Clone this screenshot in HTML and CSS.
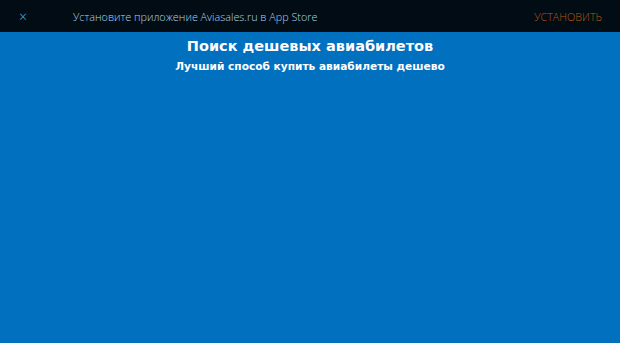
FILE: index.html
```html
<!DOCTYPE html>
<html lang="ru">
<head>
  <meta charset="UTF-8">
  <title>Aviasales</title>
  <link rel="stylesheet" href="styles.css">
</head>
<body>
  <div class="app-banner">
    <span class="close">&times;</span>
    <span class="banner-text">Установите приложение Aviasales.ru в App Store</span>
    <span class="install">УСТАНОВИТЬ</span>
  </div>
  <div class="hero">
    <h1>Поиск дешевых авиабилетов</h1>
    <p>Лучший способ купить авиабилеты дешево</p>
  </div>
</body>
</html>
```
FILE: styles.css
```css
html, body { height: 100%; }
body { margin: 0; background: #0070bf; font-family: "DejaVu Sans", sans-serif; }
.app-banner {
  height: 32px;
  background: #020c15;
  display: flex;
  align-items: center;
  font-family: "Open Sans", sans-serif;
  font-weight: 300;
  font-size: 10.8px;
  color: #a9d8ee;
}
.close { width: 19px; margin-left: 19px; font-size: 14px; color: #5aaecb; }
.banner-text { margin-left: 35px; flex: 1; }
.install { color: #b25a10; margin-right: 18px; }
.hero { text-align: center; color: #fff; padding-top: 6px; }
.hero h1 { margin: 0; font-size: 14.5px; font-weight: bold; }
.hero p { margin: 6px 0 0; font-size: 10.6px; font-weight: bold; }
```
